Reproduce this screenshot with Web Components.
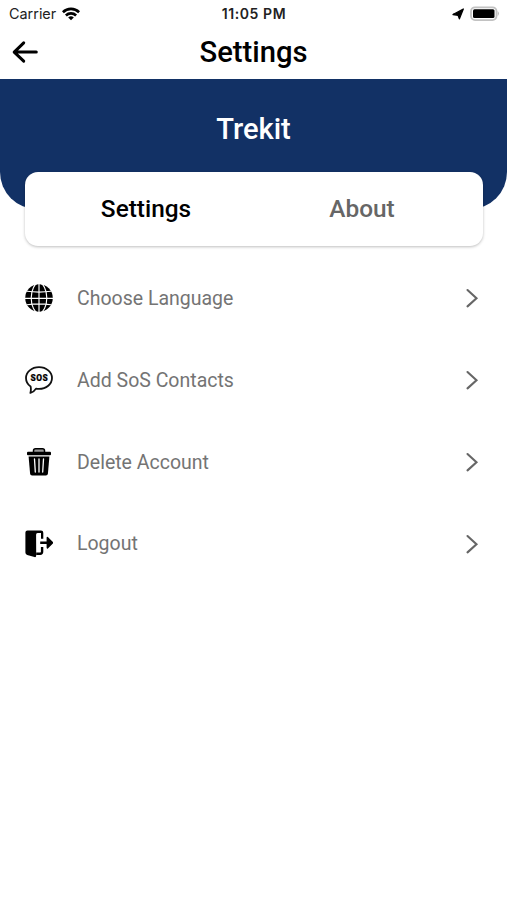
<!DOCTYPE html>
<html lang="en">
<head>
<meta charset="utf-8">
<meta name="viewport" content="width=device-width">
<title>Settings</title>
<style>
html,body{margin:0;background:#fff}
body{font-family:Roboto,sans-serif;height:900px;overflow:hidden}
</style>
</head>
<body>
<settings-screen></settings-screen>
<script>
const define = (name, html) => customElements.define(name, class extends HTMLElement {
  constructor() {
    super();
    this.attachShadow({mode: 'open'}).innerHTML = html;
  }
});

define('status-bar', `
<style>
:host{display:grid;grid-template-columns:1fr auto 1fr;align-items:center;height:27px;padding:0 7px 0 9px;box-sizing:border-box;font:400 14.4px/27px Inter,sans-serif;color:#222}
.left,.right{display:flex;align-items:center}
.left{gap:6px}
.right{justify-content:flex-end;gap:6px}
.time{font-weight:600;font-size:14px;letter-spacing:.58px;margin-right:1px}
svg{display:block}
</style>
<div class="left"><span>Carrier</span>
<svg width="18" height="14" viewBox="0 0 18 14" fill="none" stroke="#000" stroke-width="2.7"><path d="M.9 5.2a11.6 11.6 0 0 1 16.2 0"/><path d="M3.9 8.5a7.4 7.4 0 0 1 10.2 0"/><path d="M9 13.3 6.2 10.5a4 4 0 0 1 5.6 0z" fill="#000" stroke="none"/></svg></div>
<span class="time">11:05 PM</span>
<div class="right">
<svg width="12" height="12" viewBox="0 0 12 12"><path d="M11.3 1 7.4 10.8 6.1 7.3 1 6.5z" fill="#000" stroke="#000" stroke-width="1.3" stroke-linejoin="round"/></svg>
<svg width="30" height="16" viewBox="0 0 30 16"><rect x="1" y="1.3" width="25.5" height="12.8" rx="4" fill="#fff" stroke="#c2c2c2" stroke-width="1.8"/><rect x="3" y="3.3" width="21.5" height="8.8" rx="1.5" fill="#000"/><path d="M27.7 5q2.5 2.6 0 5.2z" fill="#bdbdbd"/></svg>
</div>`);

define('title-bar', `
<style>
:host{display:grid;grid-template-columns:54px 1fr 54px;align-items:center;height:52px;color:#000}
svg{display:block;margin:-2px 0 0 11px}
h1{margin:0;text-align:center;font-size:29.2px;line-height:50px;font-weight:500;padding-bottom:2px}
</style>
<svg width="28" height="26" viewBox="0 0 28 26" fill="none" stroke="#000" stroke-width="3" stroke-linecap="round" stroke-linejoin="round"><path d="M12.7 3.9 3.2 13.1l9.5 9.1M3.6 13.1h21.7"/></svg>
<h1><slot></slot></h1><span></span>`);

define('brand-banner', `
<style>
:host{display:block;height:130px;box-sizing:border-box;padding-top:30px;background:#123165;border-radius:0 0 37px 37px;color:#fff;text-align:center;font-size:29.1px;line-height:41px;font-weight:500}
</style><slot></slot>`);

define('tab-card', `
<style>
:host{display:grid;grid-template-columns:1fr 1fr;width:458px;height:74px;margin:-37px 0 0 25px;box-sizing:border-box;border-radius:13px;background:#fff;box-shadow:0 1px 3px rgba(0,0,0,.26);padding:0 13px;position:relative}
::slotted(*){text-align:center;font-size:24.4px;line-height:74px;font-weight:500;color:#666}
::slotted([aria-selected=true]){color:#000}
</style><slot></slot>`);

define('menu-row', `
<style>
:host{display:grid;grid-template-columns:28px 1fr 14px;column-gap:24px;align-items:center;height:81.75px;padding:0 28px 0 25px;font-size:19.5px;color:#747474}
svg{display:block}
span{line-height:24px;padding-top:1.6px}
::slotted(svg){display:block;width:28px;height:28px;color:#000}
</style>
<slot name="icon"></slot><span><slot></slot></span>
<svg width="14" height="20" viewBox="0 0 14 20" fill="none" stroke="#666" stroke-width="2.1" stroke-linecap="round"><path d="m2.5 2 9 8.2-9 8.2"/></svg>`);

define('settings-screen', `
<style>
:host{display:flex;flex-direction:column;width:507px;height:900px;background:#fff}
.list{padding-top:11.5px}
</style>
<status-bar></status-bar>
<title-bar>Settings</title-bar>
<brand-banner>Trekit</brand-banner>
<tab-card role="tablist"><span role="tab" aria-selected="true">Settings</span><span role="tab">About</span></tab-card>
<div class="list">
<menu-row><svg slot="icon" viewBox="0 0 28 28"><circle cx="14" cy="14" r="13.8"/><g fill="none" stroke="#fff" stroke-width="1.15"><path d="M14 0v28M0 14.3h28M2 7.3q12 1.6 24 0M2 20.7q12-1.6 24 0"/><ellipse cx="14" cy="14" rx="7.8" ry="15"/></g></svg>Choose Language</menu-row>
<menu-row><svg slot="icon" viewBox="0 0 28 28"><path d="M14 1.2c7.3 0 13 4.8 13 10.8s-5.7 10.9-13 10.9q-1.6 0-3-.3-1.8 3.1-5.6 4.3.9-3.2.2-6.5C2.7 18.5 1 15.5 1 12 1 6 6.7 1.2 14 1.2z" fill="none" stroke="#111" stroke-width="1.8" stroke-linejoin="round"/><text x="14.3" y="15" text-anchor="middle" font-family="Roboto,sans-serif" font-size="8.4" font-weight="900" letter-spacing=".4" stroke="#000" stroke-width=".2">SOS</text></svg>Add SoS Contacts</menu-row>
<menu-row><svg slot="icon" viewBox="0 0 28 28"><path d="M8.5 4.5V2.7Q8.5.8 10.5.8h7q2 0 2 1.9v1.8" fill="#999" stroke="#000" stroke-width="1.5"/><rect x="2" y="3.8" width="24" height="3.4" rx="1"/><path d="M3.6 8.5h20.8l-1.5 17.2q-.2 1.8-2 1.8H7.1q-1.8 0-2-1.8z"/><path d="m9.5 11 .8 13M14 11V24M18.5 11 17.7 24" stroke="#fff" stroke-width="1.3" stroke-linecap="round"/></svg>Delete Account</menu-row>
<menu-row><svg slot="icon" viewBox="0 0 28 28"><path d="M2.5.4H16q2.3 0 2.3 2.3v6h-2.3V3H12.6Q11 3 11.1 4.8L11.2 25.5q0 2-1.7 1.6L2.2 25Q.4 24.4.4 22.6V2.4Q.4.4 2.5.4z"/><path d="M17.1 17v4.8q0 1.9-1.9 1.9h-4" fill="none" stroke="#000" stroke-width="2.4"/><path d="M15.2 11.4h6.4V7.7q.1-1.6 1.3-.8l5 5q.7.8 0 1.5l-5 5q-1.2.8-1.3-.8v-3.7h-6.4z"/></svg>Logout</menu-row>
</div>`);
</script>
</body>
</html>
